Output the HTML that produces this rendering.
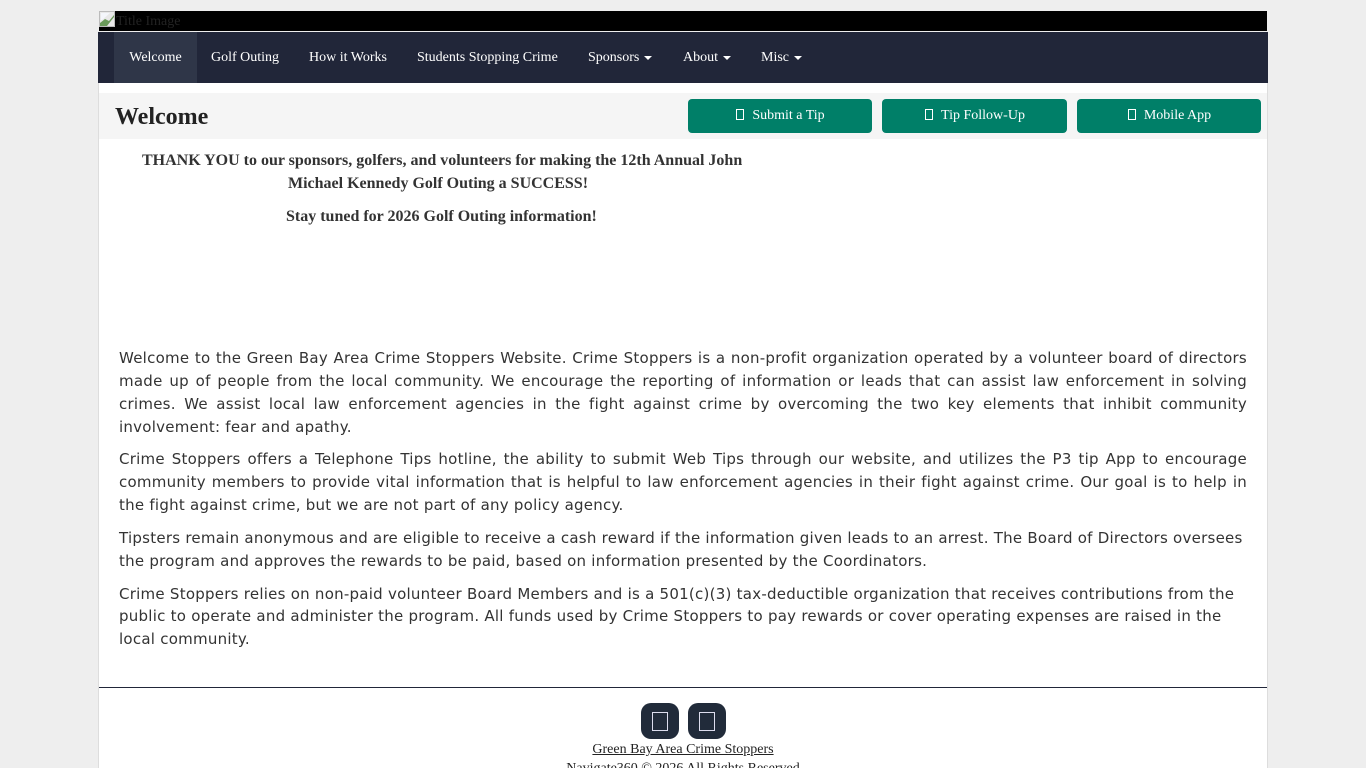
<!DOCTYPE html>
<html><head><meta charset="utf-8"><title>Green Bay Area Crime Stoppers</title>
<style>
html,body{margin:0;padding:0;width:1366px;height:768px;overflow:hidden;background:#eee;font-family:"Liberation Serif",serif;color:#222}
#root{position:absolute;left:0;top:0;width:1366px;height:768px;overflow:hidden;background:#eee}
.a{position:absolute}
#wrap{position:absolute;left:99px;top:83px;width:1168px;height:700px;background:#fff;box-shadow:0 0 0 1px #ddd}
#title{left:99px;top:11px;width:1168px;height:20px;background:#000;color:#222;font-size:14px;line-height:18px;overflow:hidden}
#title span{position:absolute;left:17px;top:2px}
#nav{left:98px;top:32px;width:1170px;height:51px;background:#212639}
#nav a{position:absolute;top:0;height:51px;line-height:51px;color:#fff;font-size:14px;text-align:center;white-space:nowrap}
.car{display:inline-block;width:0;height:0;border-left:4px solid transparent;border-right:4px solid transparent;border-top:4px solid #fff;margin-left:1px;vertical-align:middle}
#head{left:99px;top:93px;width:1168px;height:46px;background:#f5f5f5}
h1{position:absolute;left:115px;top:103px;margin:0;font-size:24px;line-height:28px;color:#222;font-weight:bold}
.btn{position:absolute;top:99px;height:34px;background:#007f68;border-radius:4px;color:#fff;font-size:14px;line-height:34px;text-align:center;white-space:nowrap;box-sizing:border-box;padding-left:1px}
.tf{display:inline-block;width:6px;height:9px;border:1px solid #fff;margin-right:8px;vertical-align:-1px}
.b{position:absolute;font-size:16px;font-weight:bold;color:#333;white-space:nowrap;line-height:20px}
#txt{position:absolute;left:119px;top:347px;width:1128px;font-family:"DejaVu Sans",sans-serif;font-size:15px;letter-spacing:.25px;line-height:22.85px;color:#333}
#txt p{margin:0 0 10px;text-align:justify}
#hr{left:99px;top:687px;width:1168px;height:1px;background:#212639}
.sq{position:absolute;top:703px;width:38px;height:36px;background:#212b3a;border-radius:10px}
.sq i{position:absolute;left:11px;top:9px;width:16px;height:19px;border:1px solid #dde;box-sizing:border-box}
.f{position:absolute;left:99px;width:1168px;text-align:center;font-size:14px;line-height:20px;color:#222}
</style></head><body>
<div id="root">
<div id="wrap" class="a"></div>
<div id="title" class="a"><svg width="16" height="16" style="position:absolute;left:0;top:0" viewBox="0 0 16 16"><rect x=".5" y=".5" width="15" height="15" fill="#e8e8e8" stroke="#bbb"/><path d="M1 15 L1 12 L6 8 L10 10 L15 4 L15 6 L8 15Z" fill="#6a9a5a"/><path d="M2 2h9L3 9H2z" fill="#f4f6fb"/></svg><span>Title Image</span></div>
<div id="nav" class="a">
<a style="left:16px;width:83px;background:#2f3648">Welcome</a>
<a style="left:113px">Golf Outing</a>
<a style="left:211px">How it Works</a>
<a style="left:319px">Students Stopping Crime</a>
<a style="left:490px">Sponsors <span class="car"></span></a>
<a style="left:585px">About <span class="car"></span></a>
<a style="left:663px">Misc <span class="car"></span></a>
</div>
<div id="head" class="a"></div>
<h1>Welcome</h1>
<div class="btn" style="left:688px;width:184px"><span class="tf"></span>Submit a Tip</div>
<div class="btn" style="left:882px;width:185px"><span class="tf"></span>Tip Follow-Up</div>
<div class="btn" style="left:1077px;width:184px"><span class="tf"></span>Mobile App</div>
<div class="b" style="left:142px;top:151px">THANK YOU to our sponsors, golfers, and volunteers for making the 12th Annual John</div>
<div class="b" style="left:288px;top:174px">Michael Kennedy Golf Outing a SUCCESS!</div>
<div class="b" style="left:286px;top:207px">Stay tuned for 2026 Golf Outing information!</div>
<div id="txt">
<p>Welcome to the Green Bay Area Crime Stoppers Website. Crime Stoppers is a non-profit organization operated by a volunteer board of directors made up of people from the local community. We encourage the reporting of information or leads that can assist law enforcement in solving crimes. We assist local law enforcement agencies in the fight against crime by overcoming the two key elements that inhibit community involvement: fear and apathy.</p>
<p>Crime Stoppers offers a Telephone Tips hotline, the ability to submit Web Tips through our website, and utilizes the P3 tip App to encourage community members to provide vital information that is helpful to law enforcement agencies in their fight against crime. Our goal is to help in the fight against crime, but we are not part of any policy agency.</p>
<p style="text-align:left">Tipsters remain anonymous and are eligible to receive a cash reward if the information given leads to an arrest. The Board of Directors oversees the program and approves the rewards to be paid, based on information presented by the Coordinators.</p>
<p style="text-align:left">Crime Stoppers relies on non-paid volunteer Board Members and is a 501(c)(3) tax-deductible organization that receives contributions from the public to operate and administer the program. All funds used by Crime Stoppers to pay rewards or cover operating expenses are raised in the local community.</p>
</div>
<div id="hr" class="a"></div>
<div class="sq" style="left:641px"><i></i></div>
<div class="sq" style="left:688px"><i></i></div>
<div class="f" style="top:740px"><span style="text-decoration:underline">Green Bay Area Crime Stoppers</span></div>
<div class="f" style="top:759px">Navigate360 © 2026 All Rights Reserved</div>
</div>
</body></html>
